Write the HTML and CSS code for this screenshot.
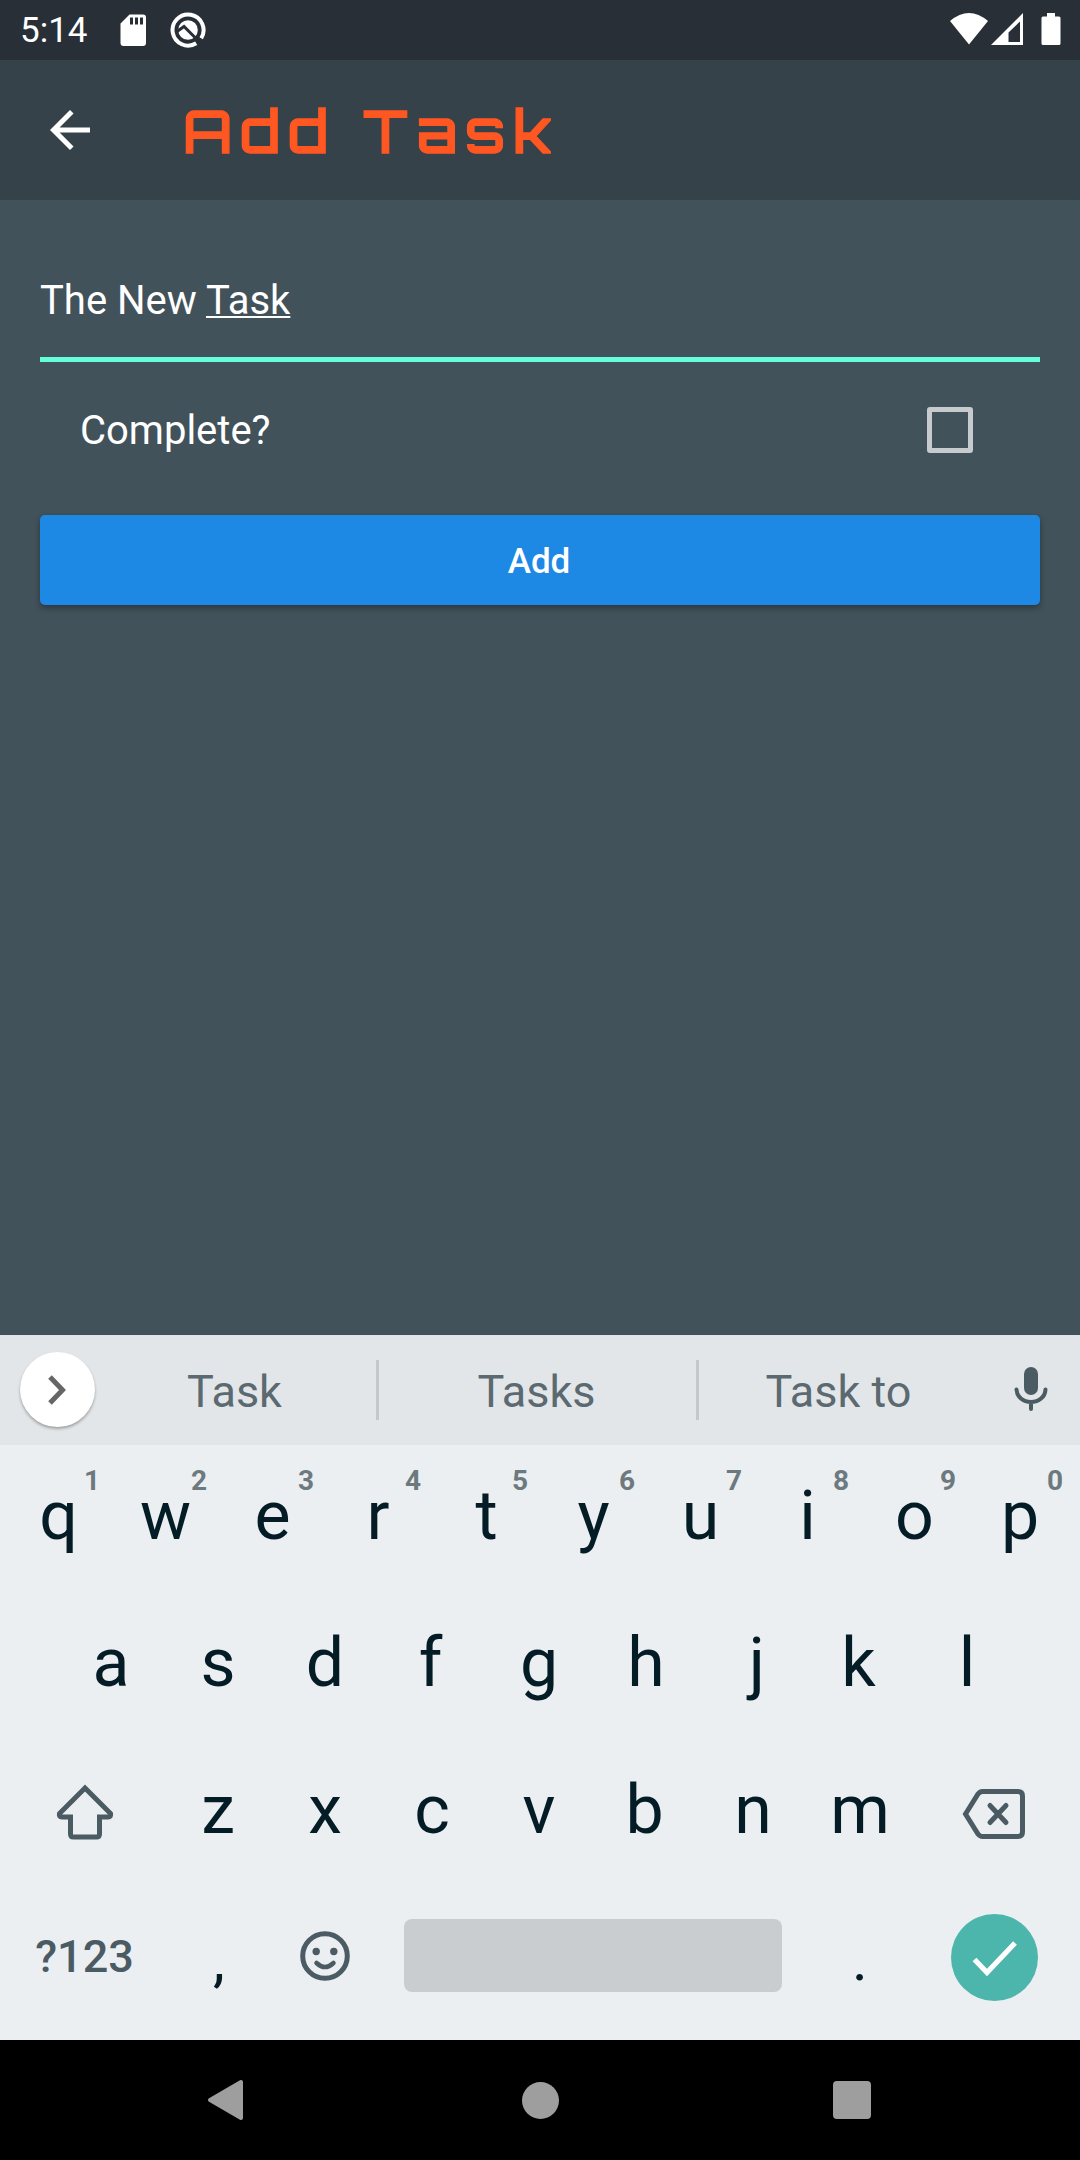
FILE: index.html
```html
<!DOCTYPE html>
<html lang="en">
<head>
<meta charset="utf-8">
<title>Add Task</title>
<link rel="stylesheet" href="styles.css">
</head>
<body>
<div class="screen">
  <header class="status">
    <span class="clock">5:14</span>
    <svg class="sd" width="26" height="32" viewBox="0 0 26 32"><path fill="#fff" fill-rule="evenodd" d="M9.500 .5H23a3 3 0 0 1 3 3V29a3 3 0 0 1-3 3H3.500a3 3 0 0 1-3-3V9.500ZM10 3.500v7h3v-7ZM15 3.500v7h3v-7ZM20 3.500v7h3v-7Z"/></svg>
    <svg class="debug" width="36" height="36" viewBox="0 0 36 36"><path d="M26.200 31.200A15.500 15.500 0 1 1 31.200 26.200" fill="none" stroke="#fff" stroke-width="4"/><circle cx="18" cy="18" r="9.800" fill="#fff"/><path d="M7 19.500L14 14.500L29 29.500" fill="none" stroke="#282f37" stroke-width="3"/></svg>
    <span class="spacer"></span>
    <svg class="wifi" width="38" height="32" viewBox="0 0 38 32"><path fill="#fff" d="M0 8Q19-8 38 8L19 31.500Z"/></svg>
    <svg class="signal" width="32" height="32" viewBox="0 0 32 32"><path fill="#fff" fill-rule="evenodd" d="M32 0V32H0ZM29 8.500L17.500 19.500V29H29Z"/></svg>
    <svg width="20" height="33" viewBox="0 0 20 33"><path fill="#fff" d="M6 0h8v3.500h4a1.500 1.500 0 0 1 1.500 1.500V30.500A1.500 1.500 0 0 1 18 32H2A1.500 1.500 0 0 1 .5 30.500V5A1.500 1.500 0 0 1 2 3.500h4Z"/></svg>
  </header>
  <div class="appbar">
    <svg width="60" height="60" viewBox="0 0 24 24"><path fill="#fff" d="M20 11H7.830l5.590-5.590L12 4l-8 8 8 8 1.410-1.410L7.830 13H20z"/></svg>
    <h1 class="title">Add Task</h1>
  </div>
  <main class="form">
    <div class="field">The New <span class="composing">Task</span></div>
    <label class="complete"><span>Complete?</span><span class="box"></span></label>
    <button class="add">Add</button>
  </main>
  <section class="keyboard">
    <div class="suggestions">
      <span class="expand"><svg width="30" height="36" viewBox="0 0 30 36"><path d="M7 5l12.500 13L7 31" fill="none" stroke="#666" stroke-width="5"/></svg></span>
      <span class="word first">Task</span>
      <i class="divider"></i>
      <span class="word second">Tasks</span>
      <i class="divider"></i>
      <span class="word third">Task to</span>
      <svg class="mic" width="34" height="46" viewBox="0 0 34 46"><rect x="10" y="1" width="14" height="28" rx="7" fill="#4b5b63"/><path d="M2.500 23.500C3 31 9 36 17 36S31 31 31.500 23.500M17 36v7" fill="none" stroke="#4b5b63" stroke-width="4" stroke-linecap="round"/></svg>
    </div>
    <div class="row top">
      <span class="key">q<sup>1</sup></span><span class="key">w<sup>2</sup></span><span class="key">e<sup>3</sup></span><span class="key narrow">r<sup>4</sup></span><span class="key">t<sup>5</sup></span><span class="key">y<sup>6</sup></span><span class="key">u<sup>7</sup></span><span class="key">i<sup>8</sup></span><span class="key">o<sup>9</sup></span><span class="key narrow">p<sup>0</sup></span>
    </div>
    <div class="row">
      <span class="key">a</span><span class="key">s</span><span class="key">d</span><span class="key narrow">f</span><span class="key">g</span><span class="key">h</span><span class="key hook">j</span><span class="key narrow">k</span><span class="key">l</span>
    </div>
    <div class="row">
      <span class="wide shift"><svg width="58" height="56" viewBox="0 0 58 56"><path d="M29 4L54.500 29.500Q55.500 33 52 33H43.500V50Q43.500 53 40.500 53H17.500Q14.500 53 14.500 50V33H6Q2.500 33 3.500 29.500Z" fill="none" stroke="#4b5b63" stroke-width="5"/></svg></span>
      <span class="key">z</span><span class="key">x</span><span class="key">c</span><span class="key">v</span><span class="key narrow">b</span><span class="key">n</span><span class="key">m</span>
      <span class="wide delete"><svg width="64" height="52" viewBox="0 0 64 52"><path d="M3.500 26L16 6Q18 3.500 20.500 3.500H56Q60.500 3.500 60.500 8V44Q60.500 48.500 56 48.500H20.500Q18 48.500 16 46Z" fill="none" stroke="#4b5b63" stroke-width="5"/><path d="M28 17.500L44 34.500M44 17.500L28 34.500" stroke="#4b5b63" stroke-width="5" stroke-linecap="round"/></svg></span>
    </div>
    <div class="row">
      <span class="wide symbols">?123</span>
      <span class="key mark comma">,</span>
      <span class="key emoji"><svg width="50" height="50" viewBox="0 0 50 50"><circle cx="25" cy="25" r="22.300" fill="none" stroke="#4b5b63" stroke-width="5"/><circle cx="16.200" cy="20.500" r="3.700" fill="#4b5b63"/><circle cx="33.800" cy="20.500" r="3.700" fill="#4b5b63"/><path d="M16.500 32Q25 40 33.500 32" fill="none" stroke="#4b5b63" stroke-width="4.500" stroke-linecap="round"/></svg></span>
      <span class="space"></span>
      <span class="key mark">.</span>
      <span class="wide last"><span class="enter"><svg width="87" height="87" viewBox="0 0 87 87"><path d="M23.500 45.500L36 58.500L64 29" fill="none" stroke="#fff" stroke-width="5.200"/></svg></span></span>
    </div>
  </section>
  <nav class="nav">
    <svg width="40" height="44" viewBox="0 0 40 44"><path d="M4 22L35 4V40Z" fill="#9e9e9e" stroke="#9e9e9e" stroke-width="4" stroke-linejoin="round"/></svg>
    <span class="home"></span>
    <span class="recent"></span>
  </nav>
</div>
</body>
</html>
```
FILE: styles.css
```css
* { box-sizing: border-box; }
body { margin: 0; font-family: Roboto, "Liberation Sans", sans-serif; }
svg { display: block; flex: none; }
.screen { width: 1080px; height: 2160px; display: flex; flex-direction: column; background: #42525a; overflow: hidden; }

.status { height: 60px; background: #282f37; display: flex; padding: 13px 19px 0 20px; }
.clock { width: 100px; color: #fff; font-size: 35px; line-height: 36px; }
.sd { margin-top: 1px; }
.debug { margin: -1px 0 0 24px; }
.spacer { flex: 1; }
.signal { margin: 0 18px 0 3px; }

.appbar { height: 140px; padding: 0 40px; display: flex; align-items: center; background: #36424a; }
.title { margin: 0 0 0 83px; font-family: Orbitron, "DejaVu Sans", sans-serif; font-size: 59px; font-weight: 500; line-height: 70px; letter-spacing: 8.700px; color: #ff5722; -webkit-text-stroke: 1.300px #ff5722; white-space: nowrap; }

.form { flex: 1; padding: 60px 40px 0; color: #fff; font-size: 40px; display: flex; flex-direction: column; }
.field { height: 102px; padding-top: 17px; line-height: 47px; border-bottom: 5px solid #64ffda; }
.composing { text-decoration: underline; text-decoration-thickness: 2px; text-underline-offset: 2px; text-decoration-skip-ink: none; }
.complete { height: 136px; padding: 0 67px 0 40px; display: flex; align-items: center; justify-content: space-between; }
.box { width: 46px; height: 46px; border: 5px solid #c7cbcd; border-radius: 3px; }
.add { height: 90px; margin-top: 17px; border: 0; padding: 2px 2px 0 0; border-radius: 5px; background: #1e88e5; color: #fff; font: 500 35px Roboto, sans-serif; box-shadow: 0 3px 6px rgba(0, 0, 0, .35); }

.keyboard { height: 705px; background: #eceff1; color: #041c26; }
.suggestions { height: 110px; padding-left: 20px; display: flex; align-items: center; background: #e3e6e8; color: #5b6970; font-size: 45px; }
.expand { width: 75px; height: 75px; margin-bottom: 1px; border-radius: 50%; background: #fff; display: flex; align-items: center; justify-content: center; box-shadow: 0 2px 3px rgba(0, 0, 0, .3); }
.word { text-align: center; line-height: 54px; padding-top: 4px; }
.first { width: 281px; padding-right: 2px; }
.second { width: 317px; padding-right: 2px; }
.third { width: 281px; padding-right: 2px; }
.divider { width: 3px; height: 60px; background: #c3c8cb; }
.mic { margin-left: 34px; margin-bottom: 2px; }
.row { height: 147px; padding: 0 2px 5px 0; display: flex; justify-content: center; font-size: 68px; line-height: 142px; }
.top { padding-right: 0; }
.key { position: relative; width: 107px; text-align: center; display: flex; align-items: center; justify-content: center; }
.key sup { position: absolute; left: 67px; top: 18px; width: 40px; font-size: 28px; font-weight: 700; line-height: 36px; color: #6c7a80; }
.narrow { padding-right: 3px; }
.hook { padding-left: 8px; }
.wide { width: 158px; display: flex; align-items: center; justify-content: center; padding-top: 8px; }
.shift { padding: 4px 2px 0 0; }
.delete { padding-left: 2px; }
.symbols { font-size: 45px; font-weight: 500; color: #4b5b63; padding: 0 2px 0 0; }
.mark { font-size: 60px; padding-top: 5px; }
.comma { padding-left: 2px; }
.emoji { padding-bottom: 3px; }
.space { width: 378px; height: 73px; margin: 33px 25px 0; border-radius: 8px; background: #c9cdd0; }
.last { padding: 1px 0 0 3px; }
.enter { width: 87px; height: 87px; border-radius: 50%; background: #4db6ac; }

.nav { height: 120px; background: #000; display: flex; align-items: center; padding-left: 206px; }
.home { width: 37px; height: 37px; border-radius: 50%; background: #9e9e9e; margin: 0 274px 0 275.500px; }
.recent { width: 38px; height: 38px; border-radius: 4px; background: #9e9e9e; }
```
